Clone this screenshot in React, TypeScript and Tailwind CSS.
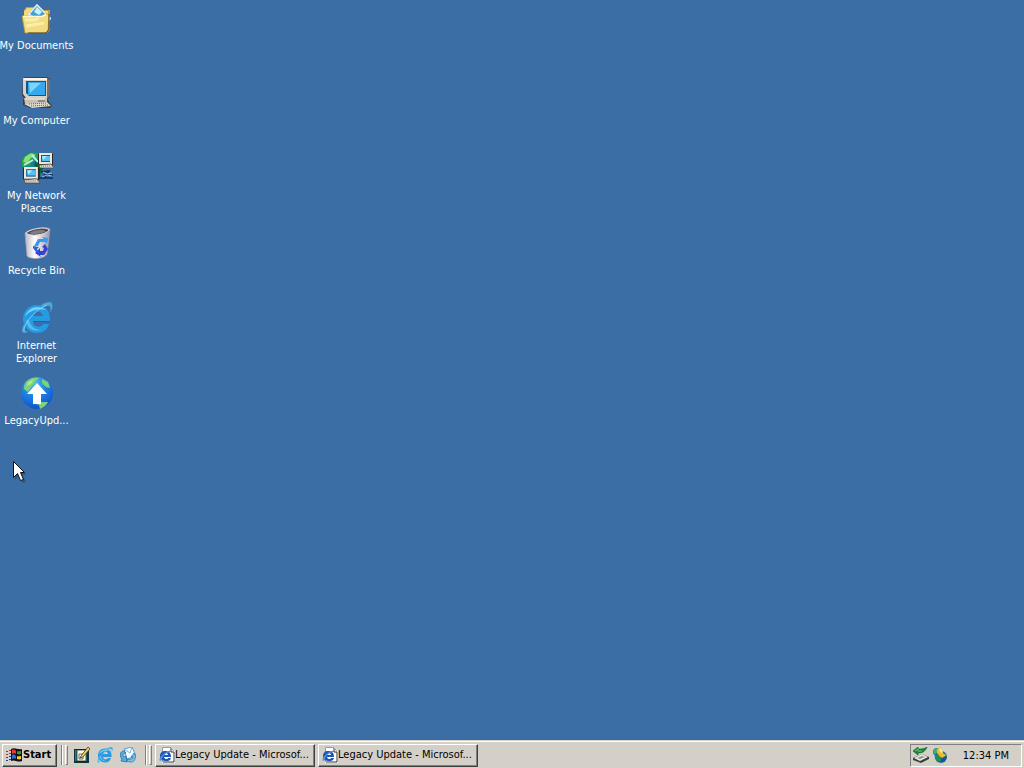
import type { ReactNode } from "react";

const raised =
  "border border-t-white border-l-white border-r-[#404040] border-b-[#404040] shadow-[inset_-1px_-1px_0_#808080]";

function DocumentsIcon() {
  return (
    <svg viewBox="0 0 32 32" className="size-8 shrink-0" aria-hidden="true">
      <path d="M3 9 5 5h8l2 3h14v20l-3 3H6z" fill="#c99a35" />
      <path d="M3 9 6 6h6l2 3h13v9H3z" fill="#f5d870" />
      <path d="m6 13 10-11 14 14-8 9z" fill="#e9f4fb" stroke="#b5cbdc" strokeWidth=".7" />
      <path d="m9 12 7-8 9 9-6 6z" fill="#3f9fce" />
      <path d="m13 10 3-5 5 5-3 3z" fill="#c8f0fb" />
      <path d="m24 11 6 6-3 3z" fill="#fff" />
      <path d="M1 14h20l4-2h3l-1 17-2 2H4z" fill="#f2dc80" stroke="#b9963e" strokeWidth=".8" />
      <path d="M2 14.500h19l4-2" fill="none" stroke="#fff8cc" strokeWidth="1.500" />
      <path d="M4 18h10l4-2M5 24l18-3" fill="none" stroke="#faeeaa" strokeWidth="3" />
      <path d="M28 12v15l-3 4H7" fill="none" stroke="#4f4525" />
    </svg>
  );
}

function ComputerIcon() {
  return (
    <svg viewBox="0 0 32 32" className="size-8 shrink-0" aria-hidden="true">
      <path d="m2 1 2-1h22l3 2v18l-3 3H5l-4-4z" fill="#45403e" />
      <path d="M2 1h24v20H5l-3-4z" fill="#d8d1c7" />
      <path d="M3 1h23v2H3z" fill="#faf5e9" />
      <path d="m26 1 3 2v16l-3 3z" fill="#77706a" />
      <path d="M5 4h20v15H8l-3-3z" fill="#17528e" />
      <path d="M7 5h17v13H7z" fill="#35a9ed" />
      <path d="M8 6h12L9 16z" fill="#7ed5fc" />
      <path d="M2 22h24l5 7-2 2H9l-7-3z" fill="#3f3a37" />
      <path d="M3 21h23v6H4z" fill="#c5bfb5" />
      <path d="M4 22h20" stroke="#f5f0e4" />
      <path d="M17 24h7" stroke="#4d5551" />
      <path d="m3 27 23-2 4 4-19 2z" fill="#ded8cd" />
      <path d="m8 27 17-1m-15 3 18-1" stroke="#655f59" strokeDasharray="1 1" />
    </svg>
  );
}

function SmallComputer() {
  return (
    <>
      <path d="M0 0h13l2 2v9l-2 2H1l-2-2V1z" fill="#282b2d" />
      <path d="M0 0h13v11H0z" fill="#eee7d5" />
      <path d="M2 2h9v7H2z" fill="#17589b" />
      <path d="M3 3h8v5H3z" fill="#50c2f6" />
      <path d="M3 3h5L4 7z" fill="#aaeaff" />
      <path d="m0 12 12-1 3 4H1z" fill="#ddd5c8" stroke="#4a4540" strokeWidth=".7" />
      <path d="M2 13h10" stroke="#777" strokeDasharray="1 1" />
    </>
  );
}

function NetworkIcon() {
  return (
    <svg viewBox="0 0 32 32" className="size-8 shrink-0" aria-hidden="true">
      <circle cx="12" cy="12" r="12" fill="#177f92" />
      <path d="M1 8C5 1 13-2 20 3l-3 6-6-1-2 6-8 1z" fill="#27a44b" />
      <path d="m4 5 6-4 5 2-5 3-4 5-4-1z" fill="#8bdf75" />
      <path d="m15 7 8-1 1 8-5 8-6-9z" fill="#0c6434" />
      <path d="m11 3 6 7M3 13l9-5" stroke="#b7edff" strokeWidth="2" />
      <g transform="translate(18 1)"><SmallComputer /></g>
      <g transform="translate(3 15) scale(1.07)"><SmallComputer /></g>
      <path d="m20 20 8-1-3 4h7M19 26h6l-2-4m9 4h-8" fill="none" stroke="#122c55" strokeWidth="1.500" />
      <path d="m22 20 4 2 5-1m-10 4 5-2 5 1" fill="none" stroke="#8ac3e9" />
    </svg>
  );
}

function RecycleIcon() {
  return (
    <svg viewBox="0 0 32 32" className="size-8 shrink-0" aria-hidden="true">
      <defs>
        <linearGradient id="bin" x2="1">
          <stop stopColor="#b9b6c3" />
          <stop offset=".4" stopColor="#fff" />
          <stop offset="1" stopColor="#9e97aa" />
        </linearGradient>
      </defs>
      <path d="M4 6C7 2 26-1 29 2l-3 25c-2 5-17 6-20 2z" fill="url(#bin)" stroke="#aaa5b2" strokeWidth=".7" />
      <path d="M5 6c4-4 20-7 23-3-3 5-19 7-23 3z" fill="#4a464d" stroke="#e0dfe5" />
      <path d="M8 6c5-3 13-4 17-2-4 3-12 4-17 2z" fill="#817c86" />
      <path d="m13 19 4-7h6l-2-2 6 1-1 6-2-2h-5l-2 4z" fill="#379ce9" />
      <path d="m24 17 3 5-4 6h-4l1 2-6-4 5-5v3h3l1-3-2-1z" fill="#3442d2" />
      <path d="m12 19 6 1-2 2 2 4-3-1-3-4z" fill="#2763dd" />
    </svg>
  );
}

function ExplorerIcon({ className }: { className: string }) {
  return (
    <svg viewBox="0 0 32 32" className={className} aria-hidden="true">
      <path
        d="M4 31c-4 1-4-5 1-12C11 9 22 0 28 0c5 0 4 6 1 11 1-5 1-8-3-7C19 5 7 17 4 25c-1 3 0 5 4 4z"
        fill="#4ba8db"
      />
      <path
        fillRule="evenodd"
        d="M16 3c8 0 13 6 13 13v3H12c0 7 8 7 10 3h6c-2 6-6 9-12 9-8 0-14-6-14-14S8 3 16 3zm-4 11h10c-1-6-9-6-10 0z"
        fill="#259be4"
      />
      <path d="M4 14C7 5 18 2 25 8c-8-2-15 0-21 6z" fill="#75d0f8" />
      <path d="M5 19c1 8 8 11 15 9-6 0-11-4-12-10z" fill="#55bcf0" />
      <path d="M12 19h17v1H12z" fill="#1666aa" />
      <path d="M3 29C2 22 15 7 26 3" fill="none" stroke="#91d8f4" strokeWidth=".8" />
    </svg>
  );
}

function UpdateIcon() {
  return (
    <svg viewBox="0 0 32 32" className="size-8 shrink-0" aria-hidden="true">
      <defs>
        <radialGradient id="globe" cx=".4" cy=".2" r=".8">
          <stop stopColor="#4bc1ef" />
          <stop offset=".5" stopColor="#1b84e0" />
          <stop offset="1" stopColor="#1253d0" />
        </radialGradient>
      </defs>
      <circle cx="16" cy="16" r="16" fill="url(#globe)" />
      <path d="M6 4c3-3 8-4 12-3l-4 4-4 5-3 5-4-3c0-4 1-6 3-8zM21 2l6 3 2 6-4-1-4-4zM16 25h11c-1 3-4 5-8 7l-1-4-3-1z" fill="#7fd17a" />
      <path d="m7 5 6-3-3 5-4 2z" fill="#b1e695" />
      <path d="m16 6 10 11h-6v10h-8V17H6z" fill="#fff" />
    </svg>
  );
}

function StartLogo() {
  return (
    <svg viewBox="0 0 16 16" className="size-4 shrink-0" aria-hidden="true">
      <path d="M5 2c4-2 6 1 11 0v12c-5 2-7-2-11 0z" fill="#111" />
      <path d="M6 3c2-1 3 0 4 1v3C9 6 8 6 6 7z" fill="#e63b2e" />
      <path d="M11 4c1 1 2 0 4 0v3c-2 1-3 0-4 0z" fill="#369a3c" />
      <path d="M6 8c2-1 3 0 4 1v3c-1-1-2-1-4 0z" fill="#306ed4" />
      <path d="M11 9c1 1 2 0 4 0v3c-2 1-3 0-4 0z" fill="#f4ca37" />
      <path d="M0 4h2v1H0zm3-1h2v1H3zM0 7h2v1H0zm3-1h2v1H3z" fill="#b72b35" />
      <path d="M0 10h2v1H0zm3-1h2v1H3zm-3 4h2v1H0zm3-1h2v1H3z" fill="#273ea4" />
    </svg>
  );
}

function DesktopIcon() {
  return (
    <svg viewBox="0 0 16 16" className="size-4" aria-hidden="true">
      <path d="M0 2h14l1 2v12H0z" fill="#12333a" />
      <path d="M1 3h12v11H1z" fill="#267d8b" />
      <path d="M3 3h9v11H3z" fill="#fffbe5" stroke="#111" strokeWidth=".7" />
      <path d="M5 7h4v5H5z" fill="none" stroke="#6f6a5b" />
      <path d="m7 9 7-9 2 2-7 8-3 1z" fill="#efd05d" stroke="#302410" strokeWidth=".7" />
    </svg>
  );
}

function MailIcon() {
  return (
    <svg viewBox="0 0 16 16" className="size-4" aria-hidden="true">
      <path d="m4 2 8-2 4 9-9 3z" fill="#f4fbff" stroke="#398ac3" strokeWidth=".8" />
      <path d="m4 2 6 4 2-6" fill="none" stroke="#75b8dd" />
      <path d="M4 4C0 4-1 9 2 12l-1 2 6 1-1-6-2 1C2 8 3 6 6 6z" fill="#55ade0" stroke="#1768ac" strokeWidth=".7" />
      <path d="M7 12c3 1 6 0 6-2l-2 0 3-4 2 4-1 1c0 4-4 5-8 3z" fill="#76c4ea" stroke="#1768ac" strokeWidth=".7" />
    </svg>
  );
}

function PageIcon() {
  return (
    <svg viewBox="0 0 16 16" className="size-4 shrink-0" aria-hidden="true">
      <path d="M3 0h9l4 4v12H3z" fill="#fff" />
      <path d="M12 1v4h3v10H4" fill="none" stroke="#353535" />
      <path d="M3.500 15V.5H12l3 4" fill="none" stroke="#999" />
      <path fillRule="evenodd" d="M6 4c4 0 6 2 6 6H5c1 3 4 2 4 1h3c-1 5-11 4-11-2 0-3 2-5 5-5zM5 8h4c-1-3-4-2-4 0z" fill="#1e56b8" />
      <path d="M1 14C-2 11 9 2 12 4v1C9 4 2 10 3 13z" fill="#4b91d3" />
    </svg>
  );
}

function RemoveDeviceIcon() {
  return (
    <svg viewBox="0 0 16 16" className="size-4 shrink-0" aria-hidden="true">
      <path d="m0 11 9-4 7 3v2l-8 4-8-3z" fill="#3c3f3c" />
      <path d="m1 11 8-4 6 3-8 4z" fill="#e8e8e2" />
      <path d="m4 11 5-2 3 1-5 2z" fill="#8f958e" />
      <path d="m0 4 5-4v2c4 0 6 0 9-2-2 5-5 6-9 6v2z" fill="#17883a" stroke="#075c22" strokeWidth=".6" />
      <path d="m2 4 3-2v2h4" fill="none" stroke="#65c96a" />
    </svg>
  );
}

function TrayGlobeIcon() {
  return (
    <svg viewBox="0 0 16 16" className="size-4 shrink-0" aria-hidden="true">
      <circle cx="5" cy="5" r="4" fill="#1f83ab" />
      <path d="m2 3 4-2-1 5-3 1z" fill="#55ad64" />
      <circle cx="9" cy="10" r="6" fill="#176b93" />
      <path d="m5 2 4-2 2 6 3 2-3 3-3-1-3-4z" fill="#e6bd36" />
      <path d="m3 8 4 0 2 5-2 2c-3-1-5-4-4-7z" fill="#258c55" />
      <path d="m10 11 4-2c1 3-1 5-5 6z" fill="#1c5194" />
      <path d="m7 2 2-1 2 5-3-1z" fill="#fff080" />
    </svg>
  );
}

function DesktopItem({ lines, children }: { lines: string[]; children: ReactNode }) {
  return (
    <button type="button" className="flex h-[75px] flex-col items-center pt-0.5 text-white">
      {children}
      <span className="mt-[5px] flex flex-col items-center leading-[13px] whitespace-nowrap">
        {lines.map((line) => (
          <span key={line}>{line}</span>
        ))}
      </span>
    </button>
  );
}

function Grip() {
  return (
    <span className="flex h-5 gap-0.5" aria-hidden="true">
      <span className="w-0.5 border-r border-l border-r-white border-l-[#808080]" />
      <span className="w-[3px] border border-t-white border-r-[#808080] border-b-[#808080] border-l-white" />
    </span>
  );
}

function TaskButton() {
  return (
    <button type="button" className={`flex h-[23px] w-40 items-center pl-[3px] whitespace-nowrap ${raised}`}>
      <PageIcon />
      Legacy Update - Microsof...
    </button>
  );
}

export default function App() {
  return (
    <div className="relative flex h-screen flex-col overflow-hidden bg-[#3a6ea5] font-['Tahoma','DejaVu_Sans_Condensed','DejaVu_Sans',sans-serif] text-[11px] text-black">
      <main className="flex-1">
        <div className="flex w-[73px] flex-col">
          <DesktopItem lines={["My Documents"]}><DocumentsIcon /></DesktopItem>
          <DesktopItem lines={["My Computer"]}><ComputerIcon /></DesktopItem>
          <DesktopItem lines={["My Network", "Places"]}><NetworkIcon /></DesktopItem>
          <DesktopItem lines={["Recycle Bin"]}><RecycleIcon /></DesktopItem>
          <DesktopItem lines={["Internet", "Explorer"]}><ExplorerIcon className="size-8 shrink-0" /></DesktopItem>
          <DesktopItem lines={["LegacyUpd..."]}><UpdateIcon /></DesktopItem>
        </div>
      </main>

      <footer className="flex h-7 shrink-0 items-center border-t border-[#d4d0c8] bg-[#d4d0c8] px-0.5 pt-px shadow-[inset_0_1px_0_#fff]">
        <button type="button" className={`flex h-[23px] w-[55px] items-center gap-px pl-[3px] font-bold ${raised}`}>
          <StartLogo />
          Start
        </button>
        <nav className="ml-1 flex items-center" aria-label="Quick Launch">
          <Grip />
          <div className="ml-1 flex gap-[7px] px-0.5">
            <button type="button" aria-label="Show Desktop"><DesktopIcon /></button>
            <button type="button" aria-label="Internet Explorer"><ExplorerIcon className="size-4" /></button>
            <button type="button" aria-label="Outlook Express"><MailIcon /></button>
          </div>
        </nav>
        <div className="ml-[7px] flex min-w-0 flex-1 items-center">
          <Grip />
          <div className="ml-[3px] flex gap-[3px]">
            <TaskButton />
            <TaskButton />
          </div>
        </div>
        <div className="flex h-[23px] w-[112px] items-center border border-t-[#808080] border-r-white border-b-white border-l-[#808080] pl-0.5">
          <RemoveDeviceIcon />
          <span className="ml-[3px]"><TrayGlobeIcon /></span>
          <time className="flex-1 pt-0.5 pr-3 text-right whitespace-nowrap">12:34 PM</time>
        </div>
      </footer>

      <svg viewBox="0 0 15 23" className="pointer-events-none absolute top-[461px] left-[13px] h-[23px] w-[15px]" aria-hidden="true">
        <path d="m2 2 11 12H9l4 7-3 1-4-7-4 4z" fill="#183b60" opacity=".5" />
        <path d="M.5.500v16l4-4 3 7 3-1-3-7h4z" fill="#fff" stroke="#111" />
      </svg>
    </div>
  );
}
